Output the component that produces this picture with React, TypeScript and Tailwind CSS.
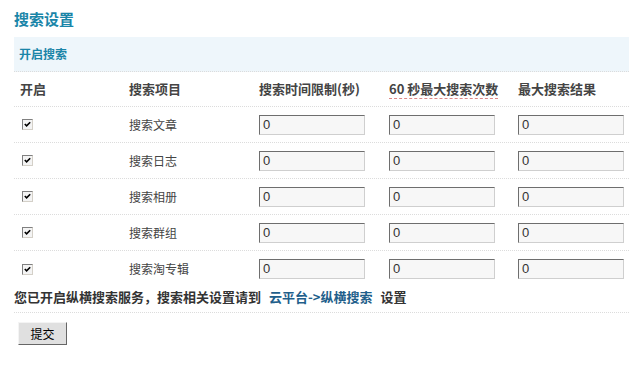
import React from "react";

const FONT = '"Noto Sans CJK SC", "Liberation Sans", sans-serif';

function Check() {
  return (
    <span className="inline-flex h-[11px] w-[11px] items-center justify-center border border-t-[#808080] border-l-[#808080] border-b-[#d4d0c8] border-r-[#d4d0c8] bg-[#f4f4f4]">
      <svg width="7" height="7" viewBox="0 0 7 7">
        <path d="M0.8 3 L2.6 4.9 L6.2 1.2" fill="none" stroke="#000" strokeWidth="1.6" />
      </svg>
    </span>
  );
}

function Input() {
  return (
    <div className="flex h-[20px] w-[106px] items-center border border-t-[#6e6e6e] border-l-[#6e6e6e] border-b-[#cfcfcf] border-r-[#cfcfcf] bg-[#f7f7f7] pl-[3px] text-[13px] text-[#333]" style={{ fontFamily: '"Liberation Sans", sans-serif' }}>
      0
    </div>
  );
}

const items = ["搜索文章", "搜索日志", "搜索相册", "搜索群组", "搜索淘专辑"];

export default function App() {
  return (
    <div className="h-[378px] w-[629px] bg-white text-[#333]" style={{ fontFamily: FONT }}>
      <div className="flex h-[37px] items-center pl-[14px] pt-[1px] text-[15px] font-bold text-[#1a85a8]">
        搜索设置
      </div>
      <div className="ml-[14px]">
        <div className="flex h-[35px] items-center border-b border-dotted border-[#dcdcdc] bg-[#eef6fb] pl-[5px] text-[12px] font-bold text-[#1a85a8]">
          开启搜索
        </div>
        <div className="grid h-[35px] grid-cols-[109px_130px_130px_129px_1fr] items-center border-b border-dotted border-[#dcdcdc] text-[13px] font-bold text-[#444]">
          <div className="pl-[6px]">开启</div>
          <div className="pl-[6px]">搜索项目</div>
          <div className="pl-[6px]">搜索时间限制(秒)</div>
          <div className="pl-[6px]">
            <span className="border-b border-dashed border-[#d88]">60 秒最大搜索次数</span>
          </div>
          <div className="pl-[6px]">最大搜索结果</div>
        </div>
        {items.map((name, i) => (
          <div
            key={name}
            className={
              i < items.length - 1
                ? "grid h-[36px] grid-cols-[109px_130px_130px_129px_1fr] items-center border-b border-dotted border-[#dcdcdc] text-[12px]"
                : "grid h-[36px] grid-cols-[109px_130px_130px_129px_1fr] items-center text-[12px]"
            }
          >
            <div className="flex pl-[8px]">
              <Check />
            </div>
            <div className="pl-[6px] text-[#444]">{name}</div>
            <div className="pl-[6px]">
              <Input />
            </div>
            <div className="pl-[6px]">
              <Input />
            </div>
            <div className="pl-[6px]">
              <Input />
            </div>
          </div>
        ))}
        <div className="flex h-[26px] items-start border-b border-dotted border-[#dcdcdc] text-[13px] font-bold text-[#333]">
          <span>您已开启纵横搜索服务，搜索相关设置请到</span>
          <span className="ml-[8px] text-[#1f5f8b]">云平台-&gt;纵横搜索</span>
          <span className="ml-[8px]">设置</span>
        </div>
        <div className="pl-[4px] pt-[9px]">
          <button className="flex h-[23px] w-[49px] items-center justify-center border border-t-[#f4f4f4] border-l-[#f4f4f4] border-b-[#666] border-r-[#666] bg-[#e0e0e0] text-[12px] text-black">
            提交
          </button>
        </div>
      </div>
    </div>
  );
}
